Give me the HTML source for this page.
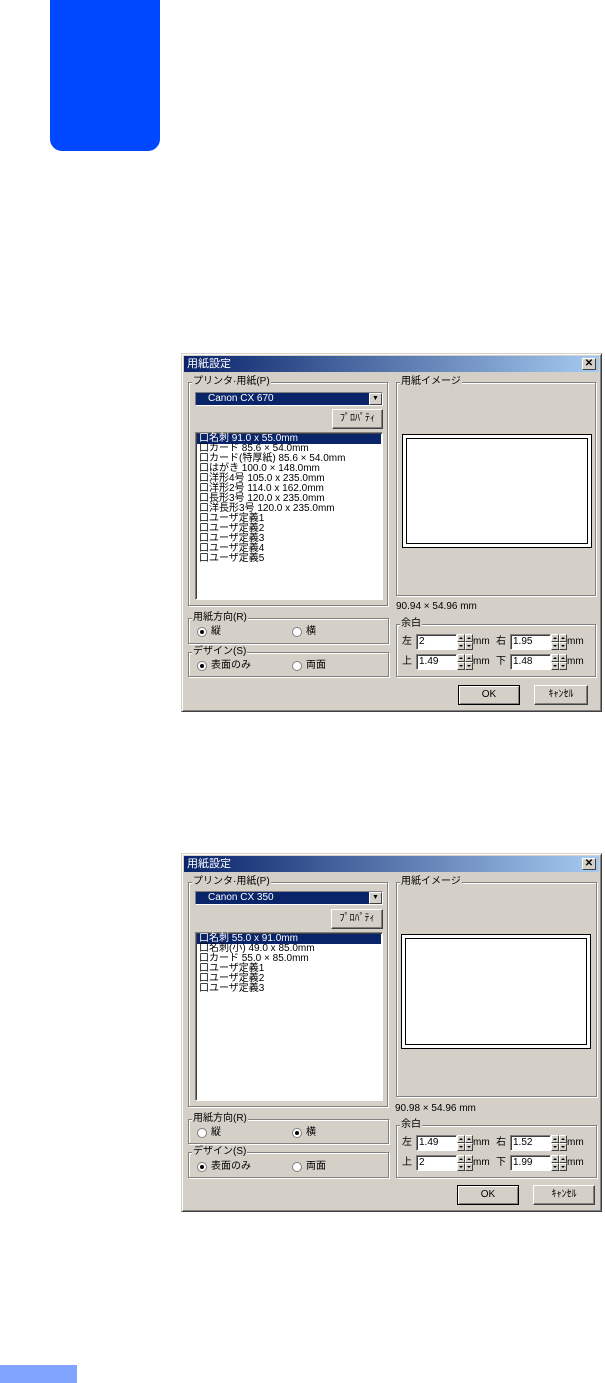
<!DOCTYPE html>
<html><head><meta charset="utf-8">
<style>
*{margin:0;padding:0;box-sizing:border-box}
body{width:605px;height:1383px;background:#fff;position:relative;overflow:hidden;font-family:"Liberation Sans","Noto Sans CJK JP",sans-serif;font-size:10px;color:#000}
.a{position:absolute}
.dlg{position:absolute;width:421px;height:359px;background:#d4d0c8;border:1px solid;border-color:#d4d0c8 #404040 #404040 #d4d0c8;box-shadow:inset 1px 1px 0 #fff,inset -1px -1px 0 #808080}
.tb{position:absolute;left:2px;top:2px;right:2px;height:16px;background:linear-gradient(90deg,#0a246a,#a6caf0);color:#fff;font-size:11px;line-height:16px;padding-left:3px}
.cls{position:absolute;right:3px;top:2px;width:14px;height:12px;background:#d4d0c8;border:1px solid;border-color:#fff #404040 #404040 #fff;color:#000;font-size:10px;line-height:10px;text-align:center;font-weight:bold}
.grp{position:absolute;border:1px solid #808080;box-shadow:1px 1px 0 #fff,inset 1px 1px 0 #fff}
.lg{position:absolute;background:#d4d0c8;padding:0 1px;line-height:11px;white-space:nowrap}
.sunk{position:absolute;background:#fff;border:1px solid;border-color:#808080 #fff #fff #808080;box-shadow:inset 1px 1px 0 #404040}
.btn{position:absolute;background:#d4d0c8;border:1px solid;border-color:#fff #404040 #404040 #fff;box-shadow:inset -1px -1px 0 #808080;text-align:center;line-height:18px}
.li{height:10px;line-height:10px;white-space:nowrap;padding-left:2px;font-size:10px}
.sel{background:#0a246a;color:#fff}
.rad{position:absolute;width:10px;height:10px;border-radius:50%;background:#fff;border:1px solid #808080}
.rad.on::after{content:"";position:absolute;left:2px;top:2px;width:4px;height:4px;border-radius:50%;background:#000}
.t{position:absolute;white-space:nowrap;line-height:12px}
.spin{position:absolute;width:16px;height:16px}
.spin i{position:absolute;width:8px;height:8px;background:#d4d0c8;border:1px solid;border-color:#fff #404040 #404040 #fff}
.spin i::after{content:"";position:absolute;left:1px;top:2px;border-left:2px solid transparent;border-right:2px solid transparent}
.spin i.u::after{border-bottom:2px solid #000}
.spin i.d::after{border-top:2px solid #000}
</style></head><body>
<div class="a" style="left:50px;top:0;width:110px;height:151px;background:#0048ff;border-radius:0 0 12px 12px"></div>
<div class="a" style="left:0;top:1365px;width:77px;height:18px;background:#80a4ff"></div>

<!-- Dialog 1 -->
<div class="dlg" style="left:181px;top:353px">
 <div class="tb">用紙設定<div class="cls">✕</div></div>
 <div class="grp" style="left:6px;top:28px;width:200px;height:224px"></div>
 <div class="lg" style="left:10px;top:22px">プリンタ·用紙(P)</div>
 <div class="sunk" style="left:13px;top:38px;width:188px;height:14px;background:#0a246a;box-shadow:none"><span class="t" style="left:12px;top:0;color:#fff">Canon CX 670</span><div class="a" style="right:0;top:0;width:13px;height:12px;background:#d4d0c8;border:1px solid;border-color:#fff #404040 #404040 #fff;font-size:7px;line-height:10px;text-align:center">▼</div></div>
 <div class="btn" style="left:150px;top:55px;width:51px;height:20px">ﾌﾟﾛﾊﾟﾃｨ</div>
 <div class="sunk" style="left:13px;top:78px;width:188px;height:168px;padding:1px">
  <div class="li sel">口名刺 91.0 x 55.0mm</div>
  <div class="li">口カード 85.6 × 54.0mm</div>
  <div class="li">口カード(特厚紙) 85.6 × 54.0mm</div>
  <div class="li">口はがき 100.0 × 148.0mm</div>
  <div class="li">口洋形4号 105.0 x 235.0mm</div>
  <div class="li">口洋形2号 114.0 x 162.0mm</div>
  <div class="li">口長形3号 120.0 x 235.0mm</div>
  <div class="li">口洋長形3号 120.0 x 235.0mm</div>
  <div class="li">口ユーザ定義1</div>
  <div class="li">口ユーザ定義2</div>
  <div class="li">口ユーザ定義3</div>
  <div class="li">口ユーザ定義4</div>
  <div class="li">口ユーザ定義5</div>
 </div>
 <div class="grp" style="left:214px;top:28px;width:200px;height:214px"></div>
 <div class="lg" style="left:218px;top:22px">用紙イメージ</div>
 <div class="a" style="left:220px;top:80px;width:190px;height:114px;background:#fff;border:1px solid #000"><div class="a" style="left:3px;top:3px;right:3px;bottom:3px;border:1px solid #000"></div></div>
 <div class="t" style="left:214px;top:247px">90.94 × 54.96 mm</div>
 <div class="grp" style="left:6px;top:264px;width:201px;height:26px"></div>
 <div class="lg" style="left:10px;top:258px">用紙方向(R)</div>
 <div class="rad on" style="left:15px;top:273px"></div><div class="t" style="left:29px;top:272px">縦</div>
 <div class="rad" style="left:110px;top:273px"></div><div class="t" style="left:124px;top:272px">横</div>
 <div class="grp" style="left:6px;top:298px;width:201px;height:25px"></div>
 <div class="lg" style="left:10px;top:292px">デザイン(S)</div>
 <div class="rad on" style="left:15px;top:307px"></div><div class="t" style="left:29px;top:306px">表面のみ</div>
 <div class="rad" style="left:110px;top:307px"></div><div class="t" style="left:124px;top:306px">両面</div>
 <div class="grp" style="left:214px;top:270px;width:200px;height:53px"></div>
 <div class="lg" style="left:218px;top:264px">余白</div>
 <div class="t" style="left:220px;top:282px">左</div><div class="sunk" style="left:234px;top:280px;width:41px;height:16px"><span class="t" style="left:2px;top:1px">2</span></div>
 <div class="spin" style="left:275px;top:280px"><i class="u" style="left:0;top:0"></i><i class="d" style="left:0;top:8px"></i><i class="u" style="left:8px;top:0"></i><i class="d" style="left:8px;top:8px"></i></div><div class="t" style="left:291px;top:282px">mm</div>
 <div class="t" style="left:314px;top:282px">右</div><div class="sunk" style="left:328px;top:280px;width:41px;height:16px"><span class="t" style="left:2px;top:1px">1.95</span></div>
 <div class="spin" style="left:369px;top:280px"><i class="u" style="left:0;top:0"></i><i class="d" style="left:0;top:8px"></i><i class="u" style="left:8px;top:0"></i><i class="d" style="left:8px;top:8px"></i></div><div class="t" style="left:385px;top:282px">mm</div>
 <div class="t" style="left:220px;top:302px">上</div><div class="sunk" style="left:234px;top:300px;width:41px;height:16px"><span class="t" style="left:2px;top:1px">1.49</span></div>
 <div class="spin" style="left:275px;top:300px"><i class="u" style="left:0;top:0"></i><i class="d" style="left:0;top:8px"></i><i class="u" style="left:8px;top:0"></i><i class="d" style="left:8px;top:8px"></i></div><div class="t" style="left:291px;top:302px">mm</div>
 <div class="t" style="left:314px;top:302px">下</div><div class="sunk" style="left:328px;top:300px;width:41px;height:16px"><span class="t" style="left:2px;top:1px">1.48</span></div>
 <div class="spin" style="left:369px;top:300px"><i class="u" style="left:0;top:0"></i><i class="d" style="left:0;top:8px"></i><i class="u" style="left:8px;top:0"></i><i class="d" style="left:8px;top:8px"></i></div><div class="t" style="left:385px;top:302px">mm</div>
 <div class="btn" style="left:276px;top:331px;width:62px;height:20px;border-color:#000;box-shadow:inset 1px 1px 0 #fff,inset -1px -1px 0 #808080">OK</div>
 <div class="btn" style="left:352px;top:331px;width:54px;height:20px">ｷｬﾝｾﾙ</div>
</div>

<!-- Dialog 2 -->
<div class="dlg" style="left:181px;top:853px">
 <div class="tb">用紙設定<div class="cls">✕</div></div>
 <div class="grp" style="left:6px;top:28px;width:200px;height:225px"></div>
 <div class="lg" style="left:10px;top:22px">プリンタ·用紙(P)</div>
 <div class="sunk" style="left:13px;top:37px;width:188px;height:14px;background:#0a246a;box-shadow:none"><span class="t" style="left:12px;top:0;color:#fff">Canon CX 350</span><div class="a" style="right:0;top:0;width:13px;height:12px;background:#d4d0c8;border:1px solid;border-color:#fff #404040 #404040 #fff;font-size:7px;line-height:10px;text-align:center">▼</div></div>
 <div class="btn" style="left:149px;top:55px;width:52px;height:20px">ﾌﾟﾛﾊﾟﾃｨ</div>
 <div class="sunk" style="left:13px;top:78px;width:188px;height:169px;padding:1px">
  <div class="li sel">口名刺 55.0 x 91.0mm</div>
  <div class="li">口名刺(小) 49.0 x 85.0mm</div>
  <div class="li">口カード 55.0 × 85.0mm</div>
  <div class="li">口ユーザ定義1</div>
  <div class="li">口ユーザ定義2</div>
  <div class="li">口ユーザ定義3</div>
 </div>
 <div class="grp" style="left:214px;top:28px;width:201px;height:215px"></div>
 <div class="lg" style="left:218px;top:22px">用紙イメージ</div>
 <div class="a" style="left:219px;top:80px;width:190px;height:115px;background:#fff;border:1px solid #000"><div class="a" style="left:3px;top:3px;right:3px;bottom:3px;border:1px solid #000"></div></div>
 <div class="t" style="left:213px;top:249px">90.98 × 54.96 mm</div>
 <div class="grp" style="left:6px;top:265px;width:201px;height:25px"></div>
 <div class="lg" style="left:10px;top:259px">用紙方向(R)</div>
 <div class="rad" style="left:15px;top:274px"></div><div class="t" style="left:29px;top:273px">縦</div>
 <div class="rad on" style="left:110px;top:274px"></div><div class="t" style="left:124px;top:273px">横</div>
 <div class="grp" style="left:6px;top:298px;width:201px;height:26px"></div>
 <div class="lg" style="left:10px;top:292px">デザイン(S)</div>
 <div class="rad on" style="left:15px;top:308px"></div><div class="t" style="left:29px;top:307px">表面のみ</div>
 <div class="rad" style="left:110px;top:308px"></div><div class="t" style="left:124px;top:307px">両面</div>
 <div class="grp" style="left:214px;top:271px;width:201px;height:53px"></div>
 <div class="lg" style="left:218px;top:265px">余白</div>
 <div class="t" style="left:220px;top:283px">左</div><div class="sunk" style="left:234px;top:281px;width:41px;height:16px"><span class="t" style="left:2px;top:1px">1.49</span></div>
 <div class="spin" style="left:275px;top:281px"><i class="u" style="left:0;top:0"></i><i class="d" style="left:0;top:8px"></i><i class="u" style="left:8px;top:0"></i><i class="d" style="left:8px;top:8px"></i></div><div class="t" style="left:291px;top:283px">mm</div>
 <div class="t" style="left:314px;top:283px">右</div><div class="sunk" style="left:328px;top:281px;width:41px;height:16px"><span class="t" style="left:2px;top:1px">1.52</span></div>
 <div class="spin" style="left:369px;top:281px"><i class="u" style="left:0;top:0"></i><i class="d" style="left:0;top:8px"></i><i class="u" style="left:8px;top:0"></i><i class="d" style="left:8px;top:8px"></i></div><div class="t" style="left:385px;top:283px">mm</div>
 <div class="t" style="left:220px;top:303px">上</div><div class="sunk" style="left:234px;top:301px;width:41px;height:16px"><span class="t" style="left:2px;top:1px">2</span></div>
 <div class="spin" style="left:275px;top:301px"><i class="u" style="left:0;top:0"></i><i class="d" style="left:0;top:8px"></i><i class="u" style="left:8px;top:0"></i><i class="d" style="left:8px;top:8px"></i></div><div class="t" style="left:291px;top:303px">mm</div>
 <div class="t" style="left:314px;top:303px">下</div><div class="sunk" style="left:328px;top:301px;width:41px;height:16px"><span class="t" style="left:2px;top:1px">1.99</span></div>
 <div class="spin" style="left:369px;top:301px"><i class="u" style="left:0;top:0"></i><i class="d" style="left:0;top:8px"></i><i class="u" style="left:8px;top:0"></i><i class="d" style="left:8px;top:8px"></i></div><div class="t" style="left:385px;top:303px">mm</div>
 <div class="btn" style="left:275px;top:331px;width:62px;height:20px;border-color:#000;box-shadow:inset 1px 1px 0 #fff,inset -1px -1px 0 #808080">OK</div>
 <div class="btn" style="left:351px;top:331px;width:62px;height:20px">ｷｬﾝｾﾙ</div>
</div>
</body></html>
